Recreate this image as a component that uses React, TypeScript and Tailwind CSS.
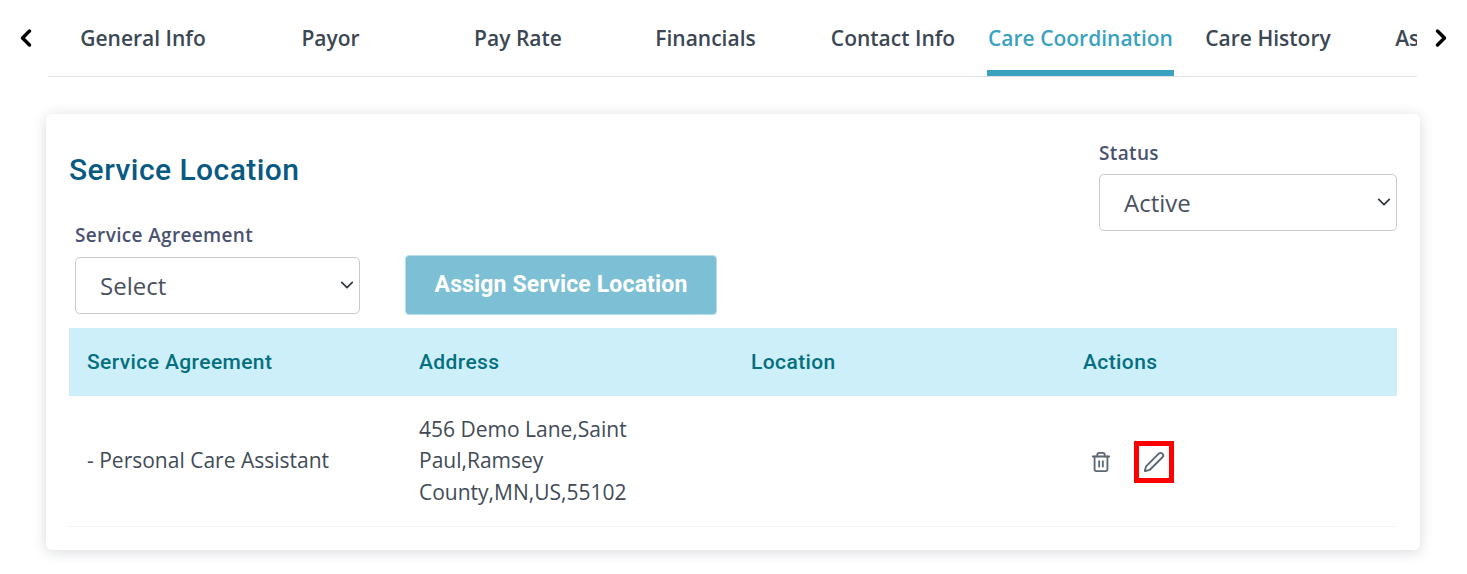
import { ChevronLeft, ChevronRight, Pen, Trash2 } from 'lucide-react';

const tabs = ['General Info', 'Payor', 'Pay Rate', 'Financials', 'Contact Info', 'Care Coordination', 'Care History', 'Assessment'];
const openSans = "font-['Open_Sans',sans-serif]";
const roboto = "font-['Roboto',sans-serif]";
const columns = ['Service Agreement', 'Address', 'Location', 'Actions'];

const SelectArrow = () => (
  <svg viewBox="0 0 16 16" className="pointer-events-none absolute right-[6px] top-[21px] h-[14px] w-[14px]" fill="none" stroke="#343a40" strokeWidth={2} strokeLinecap="round" strokeLinejoin="round">
    <path d="M2 5l6 6 6-6" />
  </svg>
);

const App = () => {
  return (
    <div className={`min-h-[574px] bg-white pt-[1px] ${openSans}`}>
      {/* Tabs */}
      <div className="flex h-[76px] items-stretch">
        <div className="flex w-[48px] items-center justify-center pb-[2px] pl-[3px]">
          <ChevronLeft className="h-[28px] w-[28px] text-black" strokeWidth={3} />
        </div>
        <div className="flex w-[1369px] overflow-hidden border-b border-[#dee2e6] pl-[1.25px]">
          {tabs.map((tab, index) => (
            <div
              key={tab}
              className={`flex h-[75px] w-[187.5px] shrink-0 items-start justify-center whitespace-nowrap border-b-[6px] pt-[21px] text-[21px] leading-[32px] font-semibold ${
                index === 5 ? 'border-[#3ba1c0] text-[#3ba1c0]' : 'border-transparent text-[#3c4754]'
              }`}
            >
              {tab}
            </div>
          ))}
        </div>
        <div className="flex w-[50px] items-center pb-[2px] pl-[10px]">
          <ChevronRight className="h-[28px] w-[28px] text-black" strokeWidth={3} />
        </div>
      </div>

      {/* Card */}
      <div className="ml-[46px] mt-[37px] h-[436px] w-[1374px] rounded-[6px] bg-white px-[23px] shadow-[0_2px_14px_rgba(60,70,90,0.2)]">
        <div className="flex h-[214px] justify-between">
          <div>
            <h2 className={`pt-[36px] text-[30px] leading-[40px] font-medium tracking-[0.45px] text-[#085a82] ${roboto}`}>
              Service Location
            </h2>
            <div className="mt-[32px] flex items-end pl-[6px]">
              <div>
                <label className="block text-[19px] leading-[26px] font-[550] tracking-[0.35px] text-[#4a5270]">Service Agreement</label>
                <div className="relative mb-[1px] mt-[9px] h-[57px] w-[285px]">
                  <select className="h-full w-full appearance-none rounded-[5px] border border-[#c8cacc] bg-white pl-[24px] text-[24px] text-[#4a5160]">
                    <option>Select</option>
                  </select>
                  <SelectArrow />
                </div>
              </div>
              <button className={`ml-[45px] h-[60px] w-[312px] rounded-[4px] border border-[#b5dfeb] bg-[#7dbfd4] text-[23px] font-bold tracking-[0.15px] text-white ${roboto}`}>
                Assign Service Location
              </button>
            </div>
          </div>
          <div className="pt-[26px]">
            <label className="block text-[19px] leading-[26px] font-[550] tracking-[0.35px] text-[#4a5270]">Status</label>
            <div className="relative mt-[8px] h-[57px] w-[298px]">
              <select className="h-full w-full appearance-none rounded-[5px] border border-[#c8cacc] bg-white pl-[24px] text-[24px] text-[#4a5160]">
                <option>Active</option>
              </select>
              <SelectArrow />
            </div>
          </div>
        </div>

        {/* Table */}
        <div className="grid h-[68px] grid-cols-4 items-center bg-[#cdeff9] pt-[1px]">
          {columns.map((column) => (
            <div key={column} className={`pl-[18px] text-[21px] font-medium tracking-[0.4px] text-[#04707f] ${roboto}`}>
              {column}
            </div>
          ))}
        </div>
        <div className="grid h-[131px] grid-cols-4 items-center border-b border-[#f2f3f4] text-[21px] leading-[31.5px] text-[#414b57]">
          <div className="pl-[18px]">- Personal Care Assistant</div>
          <div className="w-[240px] pl-[18px]">456 Demo Lane,Saint Paul,Ramsey County,MN,US,55102</div>
          <div />
          <div className="flex items-center pl-[25px] pt-[1px]">
            <Trash2 className="h-[22px] w-[22px] text-[#5b6773]" strokeWidth={2} />
            <div className="ml-[22px] flex h-[42px] w-[40px] items-center justify-center border-[5px] border-[#ff0000]">
              <Pen className="h-[22px] w-[22px] shrink-0 text-[#5b6773]" strokeWidth={2} />
            </div>
          </div>
        </div>
      </div>
    </div>
  );
};

export default App;
